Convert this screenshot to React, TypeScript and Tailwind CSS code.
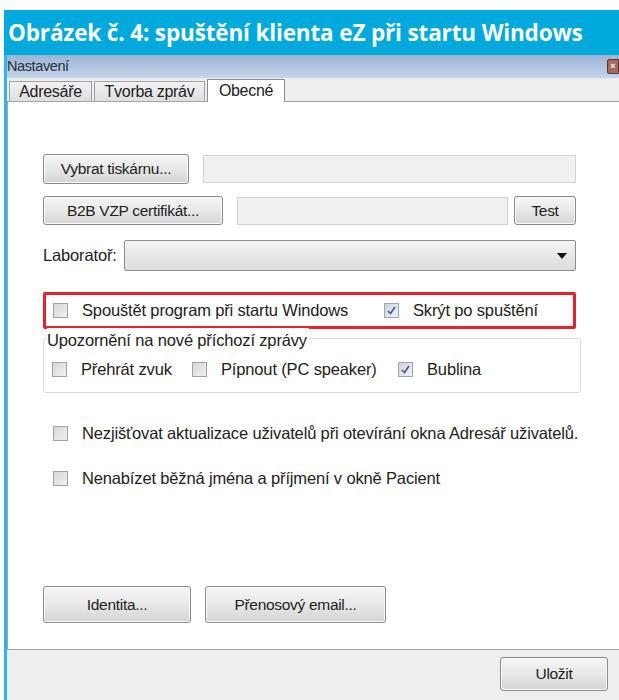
import { ReactNode } from 'react'

const ui = { fontFamily: '"Liberation Sans", "DejaVu Sans", sans-serif' }

function WinButton({ children, className = '' }: { children: ReactNode; className?: string }) {
  return (
    <div
      className={`flex items-center justify-center rounded-[3px] border border-[#8a8a8a] bg-gradient-to-b from-[#f6f6f6] via-[#e8e8e8] to-[#d4d4d4] text-[15.5px] tracking-[-0.3px] text-[#1e1e1e] shadow-[inset_0_0_0_1px_#fbfbfb] ${className}`}
    >
      {children}
    </div>
  )
}

function Check({ checked = false }: { checked?: boolean }) {
  return (
    <div
      className={`flex h-[15px] w-[15px] shrink-0 items-center justify-center border bg-gradient-to-br ${
        checked ? 'border-[#9ea6b6] from-[#ccd3e0] to-[#eef1f6]' : 'border-[#a3a3a3] from-[#d6d6d6] to-[#f1f1f1]'
      }`}
    >
      {checked && (
        <svg width="11" height="11" viewBox="0 0 11 11">
          <path d="M2 6 L4.5 8.5 L9 2" fill="none" stroke="#4a5a7a" strokeWidth="1.6" />
        </svg>
      )}
    </div>
  )
}

function CheckRow({ label, checked, className = '' }: { label: string; checked?: boolean; className?: string }) {
  return (
    <div className={`flex items-center gap-[14px] ${className}`}>
      <Check checked={checked} />
      <span className="whitespace-nowrap text-[16.5px] tracking-[-0.15px] text-[#222]">{label}</span>
    </div>
  )
}

function TextBox({ className = '' }: { className?: string }) {
  return <div className={`h-[28px] border border-[#d2d2d2] bg-[#f1f1f1] ${className}`} />
}

function Tab({ label, active = false, className = '' }: { label: string; active?: boolean; className?: string }) {
  return (
    <div
      className={`flex items-center justify-center border border-b-0 text-[16px] tracking-[-0.3px] text-[#222] ${
        active
          ? 'relative top-[1px] h-[23px] border-[#8c8c8c] bg-white'
          : 'h-[20px] border-[#a0a0a0] bg-gradient-to-b from-[#f2f2f2] to-[#dedede]'
      } ${className}`}
    >
      {label}
    </div>
  )
}

export default function App() {
  return (
    <div className="h-[700px] w-[619px] overflow-hidden bg-white pt-[10px]" style={ui}>
      <div className="ml-[4px] flex h-[690px] flex-col">
        {/* caption strip */}
        <div className="flex h-[45px] shrink-0 items-center bg-[#00a9dc] pl-[4px]">
          <span
            className="whitespace-nowrap text-[22.5px] font-bold tracking-[-0.15px] text-white"
            style={{ fontFamily: '"Open Sans", "Liberation Sans", sans-serif' }}
          >
            Obrázek č. 4: spuštění klienta eZ při startu Windows
          </span>
        </div>

        <div className="flex flex-1 flex-col border-l-[3px] border-[#2cb6e2]">
          {/* window title bar */}
          <div className="flex h-[23px] shrink-0 items-center justify-between bg-gradient-to-b from-[#9cb3d3] to-[#c5d6ec]">
            <span className="text-[14.5px] tracking-[-0.4px] text-[#26303c]">Nastavení</span>
            <div className="flex h-[15px] w-[12px] items-center justify-center rounded-l-[2px] border border-[#5a3a34] bg-[#a8685c] text-[9px] font-bold text-white">
              ×
            </div>
          </div>

          {/* tabs */}
          <div className="flex h-[23px] shrink-0 items-end gap-[2px] bg-[#eeeeee] pl-[2px]">
            <Tab label="Adresáře" className="w-[83px]" />
            <Tab label="Tvorba zpráv" className="w-[111px]" />
            <Tab label="Obecné" active className="w-[78px]" />
          </div>

          {/* tab page */}
          <div className="flex h-[549px] shrink-0 flex-col border-y border-l border-[#a5a5a5] bg-white pl-[35px] pr-[43px]">
            <div className="mt-[52px] flex items-center gap-[14px]">
              <WinButton className="h-[30px] w-[146px]">Vybrat tiskárnu...</WinButton>
              <TextBox className="flex-1" />
            </div>

            <div className="mt-[12px] flex items-center gap-[14px]">
              <WinButton className="h-[29px] w-[180px]">B2B VZP certifikát...</WinButton>
              <TextBox className="flex-1" />
              <WinButton className="-ml-[8px] h-[29px] w-[62px]">Test</WinButton>
            </div>

            <div className="mt-[15px] flex items-center gap-[7px]">
              <span className="text-[16.5px] tracking-[-0.15px] text-[#222]">Laboratoř:</span>
              <div className="flex h-[31px] flex-1 items-center justify-end rounded-[2px] border border-[#8f8f8f] bg-gradient-to-b from-[#f4f4f4] to-[#dcdcdc] pr-[8px]">
                <svg width="10" height="6" viewBox="0 0 10 6">
                  <path d="M0 0 H10 L5 6 Z" fill="#111" />
                </svg>
              </div>
            </div>

            <div className="mt-[21px] flex h-[37px] items-center rounded-[2px] border-[3px] border-[#e2222c] pl-[7px]">
              <CheckRow label="Spouštět program při startu Windows" className="w-[331px]" />
              <CheckRow label="Skrýt po spuštění" checked />
            </div>

            <div className="relative mt-[9px] mr-[-5px] h-[55px] rounded-[3px] border border-[#dcdcdc]">
              <span className="absolute -top-[11px] left-[3px] whitespace-nowrap bg-white pr-[2px] text-[16.5px] tracking-[-0.15px] text-[#222]">
                Upozornění na nové příchozí zprávy
              </span>
              <div className="flex h-full items-center pl-[8px] pt-[8px]">
                <CheckRow label="Přehrát zvuk" className="w-[140px]" />
                <CheckRow label="Pípnout (PC speaker)" className="w-[206px]" />
                <CheckRow label="Bublina" checked />
              </div>
            </div>

            <CheckRow
              label="Nezjišťovat aktualizace uživatelů při otevírání okna Adresář uživatelů."
              className="mt-[28px] pl-[10px]"
            />
            <CheckRow label="Nenabízet běžná jména a příjmení v okně Pacient" className="mt-[20px] pl-[10px]" />

            <div className="mt-auto mb-[26px] flex gap-[14px]">
              <WinButton className="h-[37px] w-[148px]">Identita...</WinButton>
              <WinButton className="h-[37px] w-[181px]">Přenosový email...</WinButton>
            </div>
          </div>

          {/* footer */}
          <div className="flex flex-1 items-start justify-end bg-[#eeeeee] pr-[11px] pt-[7px]">
            <WinButton className="h-[34px] w-[108px]">Uložit</WinButton>
          </div>
        </div>
      </div>
    </div>
  )
}
